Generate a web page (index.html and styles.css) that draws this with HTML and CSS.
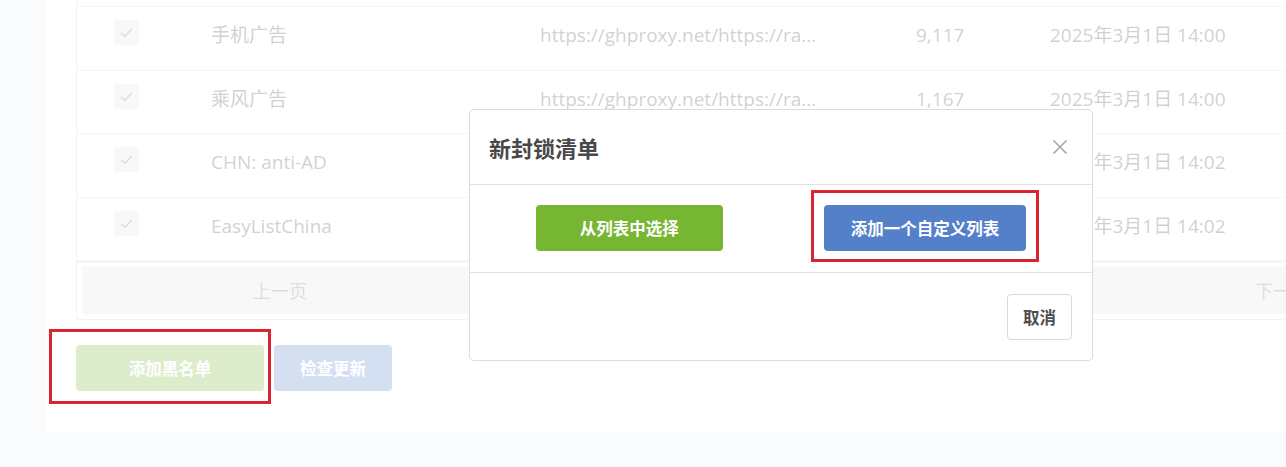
FILE: index.html
```html
<!DOCTYPE html>
<html lang="zh-CN">
<head>
<meta charset="utf-8">
<title>封锁清单</title>
<link rel="stylesheet" href="styles.css">
</head>
<body>
<main class="page">
  <section class="card">
    <div class="table">
      <div class="row row-partial"></div>
      <div class="row">
        <div class="cell cell-check"><span class="checkbox"><svg viewBox="0 0 16 16"><path d="M3 8.4l3.4 3.2L13 4.6"/></svg></span></div>
        <div class="cell cell-name">手机广告</div>
        <div class="cell cell-url">https://ghproxy.net/https://ra...</div>
        <div class="cell cell-count">9,117</div>
        <div class="cell cell-date">2025年3月1日 14:00</div>
      </div>
      <div class="row">
        <div class="cell cell-check"><span class="checkbox"><svg viewBox="0 0 16 16"><path d="M3 8.4l3.4 3.2L13 4.6"/></svg></span></div>
        <div class="cell cell-name">乘风广告</div>
        <div class="cell cell-url">https://ghproxy.net/https://ra...</div>
        <div class="cell cell-count">1,167</div>
        <div class="cell cell-date">2025年3月1日 14:00</div>
      </div>
      <div class="row">
        <div class="cell cell-check"><span class="checkbox"><svg viewBox="0 0 16 16"><path d="M3 8.4l3.4 3.2L13 4.6"/></svg></span></div>
        <div class="cell cell-name">CHN: anti-AD</div>
        <div class="cell cell-url"></div>
        <div class="cell cell-count"></div>
        <div class="cell cell-date">2025年3月1日 14:02</div>
      </div>
      <div class="row">
        <div class="cell cell-check"><span class="checkbox"><svg viewBox="0 0 16 16"><path d="M3 8.4l3.4 3.2L13 4.6"/></svg></span></div>
        <div class="cell cell-name">EasyListChina</div>
        <div class="cell cell-url"></div>
        <div class="cell cell-count"></div>
        <div class="cell cell-date">2025年3月1日 14:02</div>
      </div>
      <div class="pagination">
        <button class="page-btn" type="button">上一页</button>
        <div class="page-info"></div>
        <button class="page-btn" type="button">下一页</button>
      </div>
    </div>
    <div class="actions">
      <button class="btn btn-green" type="button">添加黑名单</button>
      <button class="btn btn-blue" type="button">检查更新</button>
    </div>
  </section>
</main>

<div class="backdrop"></div>

<div class="modal" role="dialog">
  <header class="modal-header">
    <h2 class="modal-title">新封锁清单</h2>
    <button class="modal-close" type="button" aria-label="关闭"><svg viewBox="0 0 16 16"><path d="M1.5 1.5l13 13M14.5 1.5l-13 13"/></svg></button>
  </header>
  <div class="modal-body">
    <button class="btn btn-green btn-choice" type="button">从列表中选择</button>
    <button class="btn btn-blue btn-choice" type="button">添加一个自定义列表</button>
  </div>
  <footer class="modal-footer">
    <button class="btn btn-light" type="button">取消</button>
  </footer>
</div>

<div class="highlight highlight-add"></div>
<div class="highlight highlight-custom"></div>
</body>
</html>
```

FILE: styles.css
```css
* {
  box-sizing: border-box;
}

html, body {
  margin: 0;
  height: 100%;
}

body {
  background: #e8eef5;
  font-family: "Open Sans", "Noto Sans CJK SC", sans-serif;
  color: #4a4a4a;
  overflow: hidden;
}

.page {
  padding-left: 45px;
}

/* content card, scrolled so the table is cut at the top */
.card {
  width: 1460px;
  margin-top: -56.5px;
  background: #fff;
  padding: 0 0 41px 31px;
}

.table {
  width: 1410px;
  border: 1px solid #d4d4d4;
  border-top: 0;
}

.row {
  display: grid;
  grid-template-columns: 120px 329px 376px 134px 1fr;
  height: 63.5px;
  border-bottom: 1px solid #dcdcdc;
  padding-top: 13px;
  font-size: 19px;
  line-height: 25px;
}

.cell {
  padding: 3px 0 0 14px;
  white-space: nowrap;
  overflow: hidden;
}

.cell-check {
  padding: 0 0 0 37px;
}

.checkbox {
  display: block;
  width: 25px;
  height: 25px;
  border-radius: 3px;
  background: #e2e2e2;
  padding: 4px;
}

.checkbox svg {
  display: block;
  width: 17px;
  height: 17px;
  fill: none;
  stroke: #6e6e6e;
  stroke-width: 1.2;
}

.pagination {
  display: flex;
  gap: 6px;
  padding: 3px 5px 5px;
  border-top: 2px solid #dcdcdc;
  height: 58px;
}

.page-btn {
  flex: 0 0 396px;
  border: 0;
  border-radius: 3px;
  background: #e4e4e4;
  color: #7a7a7a;
  font: inherit;
  font-size: 18px;
}

.page-info {
  flex: 1;
}

.actions {
  display: flex;
  gap: 10px;
  padding-top: 25px;
}

.btn {
  height: 46px;
  border: 0;
  border-radius: 4px;
  padding: 0 27px;
  font-family: "Noto Sans CJK SC", sans-serif;
  font-size: 16.5px;
  font-weight: 700;
  color: #fff;
}

.actions .btn-green {
  width: 188px;
}

.actions .btn-blue {
  width: 118px;
  padding: 0;
}

.btn-green {
  background: #77b632;
}

.btn-blue {
  background: #5480c9;
}

.btn-light {
  background: #fff;
  color: #4d4d4d;
  border: 1px solid #dadada;
  padding: 0 15px;
}

/* faded page behind the dialog */
.backdrop {
  position: fixed;
  inset: 0;
  background: rgba(255, 255, 255, 0.75);
}

.modal {
  position: fixed;
  left: 469px;
  top: 109px;
  width: 624px;
  background: #fff;
  border: 1px solid #dcdcdc;
  border-radius: 5px;
}

.modal-header {
  display: flex;
  align-items: center;
  justify-content: space-between;
  height: 75px;
  padding: 0 24px 0 19px;
  border-bottom: 1px solid #e2e2e2;
}

.modal-title {
  margin: 0;
  font-family: "Noto Sans CJK SC", sans-serif;
  font-size: 22px;
  font-weight: 700;
  color: #484848;
}

.modal-close {
  border: 0;
  background: none;
  padding: 0;
  width: 16px;
  height: 16px;
}

.modal-close svg {
  display: block;
  width: 16px;
  height: 16px;
  fill: none;
  stroke: #a8a8a8;
  stroke-width: 1.7;
}

.modal-body {
  display: flex;
  justify-content: center;
  gap: 101px;
  padding: 20px 20px 21px;
  border-bottom: 1px solid #e2e2e2;
}

.btn-choice {
  min-width: 187px;
}

.modal-footer {
  display: flex;
  justify-content: flex-end;
  padding: 21px 20px 20px;
}

/* red call-out frames */
.highlight {
  position: fixed;
  border: 3px solid #da2530;
}

.highlight-add {
  left: 49px;
  top: 329px;
  width: 222px;
  height: 75px;
}

.highlight-custom {
  left: 811px;
  top: 190px;
  width: 228px;
  height: 72px;
}
```
